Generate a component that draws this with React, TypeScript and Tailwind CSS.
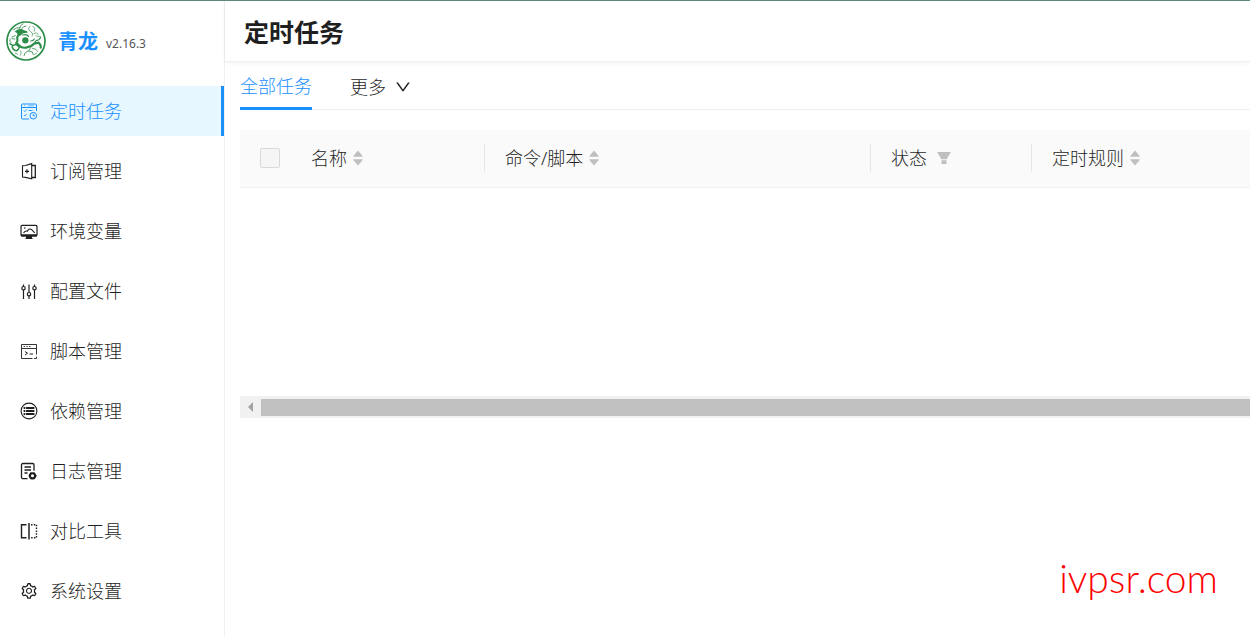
import type { FC, ReactNode } from "react"
import { clsx } from "clsx"
import { AiOutlineDown, AiOutlineSetting } from "react-icons/ai"

const Icon: FC<{ children: ReactNode }> = ({ children }) => (
  <svg
    viewBox="0 0 18 18"
    className="size-[18px] shrink-0"
    fill="none"
    stroke="currentColor"
    aria-hidden="true"
  >
    {children}
  </svg>
)

const CrontabIcon = () => (
  <Icon>
    <path d="M16.5 9V3a1 1 0 0 0-1-1h-13a1 1 0 0 0-1 1v13a1 1 0 0 0 1 1H9M1.5 5.5h15" />
    <path d="M4 3.8h1M8 3.8h6" strokeWidth=".6" />
    <path d="M3.8 8.6l1 1 2-2.2M8.5 8.5h4M3.8 13l1 1 2-2.2" strokeWidth=".9" />
    <circle cx="13.3" cy="13.7" r="3.3" />
    <path d="M13.2 11.8v2h1.8" strokeWidth=".9" />
  </Icon>
)

const SubscriptionIcon = () => (
  <Icon>
    <path d="M2.5 3.8l3-.3 6.2-1.9v15.2l-6.2-1.4-3-.3z" strokeWidth="1.1" />
    <path d="M11.7 3.5h3.6v12h-3.6" strokeWidth="1.3" />
    <path d="M5 9.3h4M7 7.3v4" strokeWidth="1.2" />
  </Icon>
)

const EnvIcon = () => (
  <Icon>
    <rect x="1" y="3.4" width="16" height="10.4" rx="1" strokeWidth="1.2" />
    <path d="M1 12.3h16v2.2H1zM6 14h6v2.2l1.5.9h-9l1.5-.9z" fill="currentColor" stroke="none" />
    <path d="M3.5 10.8q2-2.3 3.8-1.6 2.2-3.4 4.4-1.6l3 3.2" strokeWidth="1.1" />
    <circle cx="4.8" cy="6" r=".8" fill="currentColor" stroke="none" />
  </Icon>
)

const ConfigIcon = () => (
  <Icon>
    <path d="M3.5 2.5v2M3.5 8v9M9 2.5v7.8M9 14v3M14.5 2.5v2M14.5 8v9" strokeWidth="1.2" />
    <circle cx="3.5" cy="6.2" r="1.7" strokeWidth="1.2" />
    <circle cx="9" cy="12.2" r="1.7" strokeWidth="1.2" />
    <circle cx="14.5" cy="6.2" r="1.7" strokeWidth="1.2" />
  </Icon>
)

const ScriptIcon = () => (
  <Icon>
    <path d="M16.5 12.5V2.5h-15v14h11M14 16.5h2.5v-2M1.5 6.5h15" strokeWidth=".9" />
    <path d="M3.5 4.5H5M6.3 4.5h1.5M9 4.5h1.5" strokeWidth=".8" />
    <path d="M5 9.5l2.5 1.7L5 13M9.5 12h3.5" />
  </Icon>
)

const DependenceIcon = () => (
  <Icon>
    <circle cx="9" cy="9" r="7.9" strokeWidth="1.1" />
    <path d="M3.6 6h1.7M3.6 9h1.7M3.6 12h1.7" strokeWidth="1.8" />
    <path d="M6 6h8.4M6 9h8.4M6 12h8.4" strokeWidth="2.1" />
  </Icon>
)

const LogIcon = () => (
  <Icon>
    <path
      d="M7.5 16.7H3a1.5 1.5 0 0 1-1.5-1.5V2.8A1.3 1.3 0 0 1 2.8 1.5h9.9A1.3 1.3 0 0 1 14 2.8v6M4.5 5h6.5M4.5 8h6.5M4.5 11h3"
      strokeWidth="1.3"
    />
    <circle cx="12.5" cy="13.8" r="2.6" strokeWidth="2.1" />
    <path d="M8.7 13.8h1.2M15.2 13.8h1.4M10.6 10.5l.6 1M14.4 10.5l-.6 1M10.6 17.1l.6-1M14.4 17.1l-.6-1" strokeWidth="1.4" />
  </Icon>
)

const DiffIcon = () => (
  <Icon>
    <path d="M6.5 2.7H1.5v13h5" strokeWidth="1.4" />
    <path d="M9 1v16.5" strokeWidth="1.5" />
    <path d="M11 2.7h5.5v13H11" strokeWidth="1.4" strokeDasharray="1.5 1.3" />
  </Icon>
)

const Logo = () => (
  <svg
    viewBox="18 18 120 120"
    className="size-10 shrink-0"
    fill="none"
    stroke="#2b8d48"
    strokeLinecap="round"
    role="img"
    aria-label="青龙"
  >
    <circle cx="78" cy="78" r="57" strokeWidth="5" />
    <circle cx="76" cy="76" r="9.5" fill="#2b8d48" stroke="none" />
    <path d="M44 50q8-10 20-8l12 5q8 0 6 6l-13 2-8 7q-10-2-10-8z" fill="#2b8d48" stroke="none" />
    <path d="M40 44q8-7 20-6M58 40q3-10 11-14M64 42q6-10 14-9" strokeWidth="2.5" />
    <path d="M58 58q-8 6-6 14t-4 12" strokeWidth="6" />
    <path d="M46 62l-10 4M45 72l-9-1M30 72q-4 8 4 12" strokeWidth="2.5" />
    <path d="M30 86q8 8 18 2l10 8q-4 14-13 10t-8-12" strokeWidth="4.5" />
    <path d="M52 86q10 14 26 12t24-12l14-3q8 8 6 15" strokeWidth="6.5" />
    <path d="M68 60q12-4 18 4M92 78q8 0 11-6M104 84q3-10 12-9l6-8" strokeWidth="3.5" />
    <path d="M90 34q-9 9 1 15t6 14M99 34q10 6 4 15M101 55q10-5 15 4M108 63q8 4 13 1" strokeWidth="2" />
    <path d="M92 98q-3 10-11 12t-9 12M86 108l11 3 3 8M98 100q12 1 15 9" strokeWidth="2.5" />
    <path d="M62 108q4 7-1 13M46 114l7 4M104 118l6-4" strokeWidth="2" />
  </svg>
)

const menu = [
  { name: "定时任务", icon: <CrontabIcon />, active: true },
  { name: "订阅管理", icon: <SubscriptionIcon /> },
  { name: "环境变量", icon: <EnvIcon /> },
  { name: "配置文件", icon: <ConfigIcon /> },
  { name: "脚本管理", icon: <ScriptIcon /> },
  { name: "依赖管理", icon: <DependenceIcon /> },
  { name: "日志管理", icon: <LogIcon /> },
  { name: "对比工具", icon: <DiffIcon /> },
  { name: "系统设置", icon: <AiOutlineSetting className="size-[18px] shrink-0" /> },
]

const Sorter = () => (
  <svg viewBox="0 0 10 16" className="h-4 w-2.5" fill="#bfbfbf" aria-hidden="true">
    <path d="M5 .5L9.7 6a.5.5 0 0 1-.4.7H.7A.5.5 0 0 1 .3 6zM5 15.5L9.7 10a.5.5 0 0 0-.4-.7H.7a.5.5 0 0 0-.4.7z" />
  </svg>
)

const Filter = () => (
  <svg viewBox="0 0 14 14" className="size-3.5" fill="#bfbfbf" aria-hidden="true">
    <path d="M.9 1h12.2a.5.5 0 0 1 .4.8L9.6 8.2H4.4L.5 1.8A.5.5 0 0 1 .9 1zM4.5 9.3h5v3.2a.5.5 0 0 1-.5.5H5a.5.5 0 0 1-.5-.5z" />
  </svg>
)

const HeaderCell: FC<{
  title: string
  width: string
  filter?: boolean
  divider?: boolean
}> = ({ title, width, filter, divider = true }) => (
  <th className={clsx("p-0 font-light", width)}>
    <div
      className={clsx(
        "flex h-7 items-center border-r pl-5",
        divider ? "border-[#e6e6e6]" : "border-transparent"
      )}
    >
      <button
        type="button"
        className={clsx("flex items-center", filter ? "gap-2.5" : "gap-1.5")}
      >
        {title}
        {filter ? <Filter /> : <Sorter />}
      </button>
    </div>
  </th>
)

const Sidebar = () => (
  <aside className="w-[225px] shrink-0 border-r border-[#f0f0f0]">
    <div className="flex h-[85px] items-start pt-5 pl-1.5">
      <Logo />
      <a href="#home" className="ml-3 text-[20px] leading-[42px] font-bold text-[#1890ff]">
        青龙
      </a>
      <span className="ml-2 text-xs leading-[46px] font-normal text-[#555]">v2.16.3</span>
    </div>
    <nav className="flex flex-col gap-2.5">
      {menu.map(({ name, icon, active }) => (
        <a
          key={name}
          href="#menu"
          aria-current={active ? "page" : undefined}
          className={clsx(
            "flex h-[50px] items-center gap-3 border-r-3 pl-5",
            active
              ? "border-[#1890ff] bg-[#e6f7ff] text-[#1890ff]"
              : "border-transparent"
          )}
        >
          {icon}
          {name}
        </a>
      ))}
    </nav>
  </aside>
)

const Tabs = () => (
  <div role="tablist" className="flex h-12 gap-[38px] border-b border-[#f0f0f0]">
    <button
      type="button"
      role="tab"
      aria-selected="true"
      className="-mb-px border-b-3 border-[#1890ff] pt-0.5 text-[#1890ff]"
    >
      全部任务
    </button>
    <button type="button" className="flex items-center gap-2 pt-0.5">
      更多
      <AiOutlineDown className="size-[18px]" />
    </button>
  </div>
)

const TaskTable = () => (
  <div className="mt-5 overflow-hidden">
    <table className="w-[1600px] table-fixed text-left">
      <thead>
        <tr className="h-[57px] border-b border-[#f0f0f0] bg-[#fafafa]">
          <th className="w-[51px] p-0 pl-5">
            <input
              type="checkbox"
              disabled
              aria-label="全选"
              className="block size-5 appearance-none rounded-xs border border-[#d9d9d9] bg-[#f5f5f5]"
            />
          </th>
          <HeaderCell title="名称" width="w-[194px]" />
          <HeaderCell title="命令/脚本" width="w-[386px]" />
          <HeaderCell title="状态" width="w-[161px]" filter />
          <HeaderCell title="定时规则" width="w-auto" divider={false} />
        </tr>
      </thead>
      <tbody>
        <tr className="h-[209px]">
          <td colSpan={5} />
        </tr>
      </tbody>
    </table>
    <div className="flex h-[22px] items-center bg-[#f1f1f1]">
      <button
        type="button"
        aria-label="向左滚动"
        className="flex w-[21px] shrink-0 justify-center"
      >
        <svg viewBox="0 0 5 10" className="h-2.5 w-[5px]" fill="#a3a3a3">
          <path d="M5 0v10L0 5z" />
        </svg>
      </button>
      <div className="h-[17px] grow bg-[#c1c1c1]" />
    </div>
  </div>
)

export default function App() {
  return (
    <div className="relative flex min-h-screen overflow-hidden border-t border-[#5b8a76] bg-white font-['Noto_Sans','Noto_Sans_CJK_SC',sans-serif] text-[18px] leading-7 font-light text-[#1f1f1f]">
      <Sidebar />
      <main className="min-w-0 grow">
        <header className="flex h-[61px] items-center border-b border-[#f0f0f0] pt-0.5 pl-[19px] shadow-[0_1px_4px_rgba(0,21,41,0.06)]">
          <h1 className="text-[25px] leading-10 font-bold">定时任务</h1>
        </header>
        <div className="pl-[15px]">
          <Tabs />
          <TaskTable />
        </div>
      </main>
      <div className="absolute right-8 bottom-[30px] font-['Lato',sans-serif] text-[39px] leading-[56px] font-light text-[#ff0000]">
        ivpsr.com
      </div>
    </div>
  )
}
